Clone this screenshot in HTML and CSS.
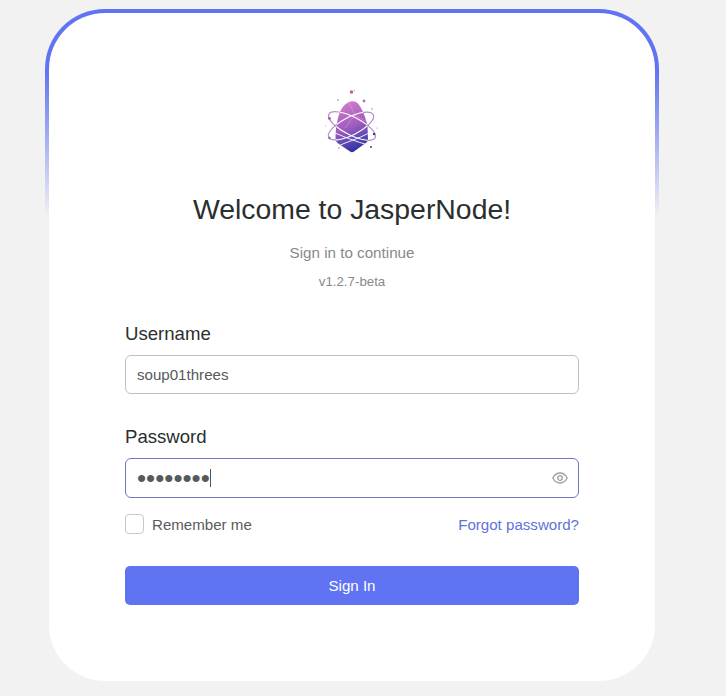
FILE: index.html
```html
<!DOCTYPE html>
<html lang="en">

<head>
  <meta charset="UTF-8">
  <meta name="viewport" content="width=device-width, initial-scale=1">
  <title>JasperNode - Sign in</title>
  <link rel="stylesheet" href="styles.css">
</head>

<body>
<div class="frame">
  <div class="card">
    <svg class="logo" viewBox="322 80 60 80" width="60" height="80">
      <defs>
        <linearGradient id="gem" x1="0.3" y1="0" x2="0.55" y2="1">
          <stop offset="0" stop-color="#d07cc8"/>
          <stop offset="0.5" stop-color="#a05cbe"/>
          <stop offset="0.78" stop-color="#5c48b4"/>
          <stop offset="1" stop-color="#2e2f9e"/>
        </linearGradient>
        <clipPath id="gem-clip">
          <path d="M349 102Q352 100.500 356 102Q359 103.500 361 108Q366 117 367.500 127L368 140Q367.500 142 365 143.500L354 151.500Q352 153 350 151.500L337.500 143Q335.500 141.500 335.500 138Q335.500 128 337.500 120Q339.500 110 345 104.500Z"/>
        </clipPath>
        <filter id="soft">
          <feGaussianBlur stdDeviation="0.3"/>
        </filter>
      </defs>
      <g filter="url(#soft)">
        <g fill="none" stroke="#b98acb" stroke-width="1.200">
          <ellipse cx="352" cy="126" rx="26" ry="9" transform="rotate(27 352 126)"/>
          <ellipse cx="351" cy="126" rx="25" ry="9" transform="rotate(-27 351 126)"/>
        </g>
        <path d="M349 102Q352 100.500 356 102Q359 103.500 361 108Q366 117 367.500 127L368 140Q367.500 142 365 143.500L354 151.500Q352 153 350 151.500L337.500 143Q335.500 141.500 335.500 138Q335.500 128 337.500 120Q339.500 110 345 104.500Z" fill="url(#gem)"/>
        <g clip-path="url(#gem-clip)">
          <path d="M349 103L355 115L367 122M355 115L345 128" fill="none" stroke="#e3a8de" stroke-width="0.500"/>
          <ellipse cx="352" cy="126" rx="26" ry="9" transform="rotate(27 352 126)" fill="none" stroke="#fff" stroke-width="1.100"/>
          <ellipse cx="351" cy="126" rx="25" ry="9" transform="rotate(-27 351 126)" fill="none" stroke="#fff" stroke-width="1.100"/>
          <path d="M335 133C345 137 356 142 369 145M336 147C346 142 358 139 369 133" fill="none" stroke="#fff" stroke-width="0.900"/>
        </g>
        <circle cx="351.500" cy="92" r="1.800" fill="#c05fa8"/>
        <circle cx="354.500" cy="90.500" r="0.700" fill="#d78fc0"/>
        <circle cx="364" cy="101" r="1.400" fill="#b86cc0"/>
        <circle cx="338" cy="100" r="0.900" fill="#c79ad0"/>
        <circle cx="329.500" cy="118.500" r="1.400" fill="#a858b0"/>
        <circle cx="325.500" cy="126" r="0.600" fill="#a8a8c8"/>
        <circle cx="372" cy="109" r="0.700" fill="#a868bb"/>
        <circle cx="374" cy="134" r="1.200" fill="#43358e"/>
        <circle cx="377" cy="128" r="0.600" fill="#8c8cb8"/>
        <circle cx="329.500" cy="138" r="1.200" fill="#9060a8"/>
        <circle cx="371" cy="147" r="1" fill="#4a3a90"/>
        <circle cx="339" cy="148" r="0.700" fill="#7060a8"/>
      </g>
    </svg>

    <h1 class="title">Welcome to JasperNode!</h1>
    <p class="subtitle">Sign in to continue</p>
    <p class="version">v1.2.7-beta</p>

    <form>
      <label class="label" for="username">Username</label>
      <input type="text" id="username" class="text" value="soup01threes">

      <label class="label second" for="password">Password</label>
      <div class="password-wrap">
        <input type="password" id="password" class="text password" value="12345678">
        <span class="caret"></span>
        <svg class="eye" viewBox="0 0 16 12" width="16" height="12">
          <path d="M0.800 6C2.500 2.800 5 1 8 1C11 1 13.500 2.800 15.200 6C13.500 9.200 11 11 8 11C5 11 2.500 9.200 0.800 6Z" fill="none" stroke="#a0a0a0" stroke-width="1.300"/>
          <circle cx="8" cy="6" r="2.300" fill="none" stroke="#a0a0a0" stroke-width="1.300"/>
        </svg>
      </div>

      <div class="options">
        <label class="remember">
          <input type="checkbox" class="check">
          <span>Remember me</span>
        </label>
        <a class="forgot" href="#">Forgot password?</a>
      </div>

      <button type="button" class="button">Sign In</button>
    </form>
  </div>
</div>
</body>

</html>
```

FILE: styles.css
```css
* {
    box-sizing: border-box;
}

body {
    margin: 0;
    height: 696px;
    overflow: hidden;
    padding: 9px 0 0 45px;
    background-color: #f2f2f2;
    font-family: "Liberation Sans", Arial, sans-serif;
}

.frame {
    width: 614px;
    height: 672px;
    padding: 4px 4px 0;
    border-radius: 60px 60px 56px 56px;
    background: linear-gradient(180deg, #6073f2 9%, rgba(96, 115, 242, 0) 31%);
}

.card {
    height: 668px;
    padding: 67px 76px 0;
    border-radius: 56px;
    background-color: #fff;
    text-align: center;
}

.logo {
    display: block;
    margin: 0 auto;
}

.title {
    margin: 33px 0 0;
    font-size: 28.4px;
    line-height: 32px;
    font-weight: normal;
    color: #2a2f2f;
}

.subtitle {
    margin: 18px 0 0;
    font-size: 15.2px;
    line-height: 20px;
    color: #878a8a;
}

.version {
    margin: 11px 0 0;
    font-size: 13.3px;
    line-height: 16px;
    color: #878a8a;
}

form {
    margin-top: 33px;
    text-align: left;
}

.label {
    display: block;
    margin-bottom: 10px;
    font-size: 18.6px;
    line-height: 22px;
    color: #2a2f2f;
}

.second {
    margin-top: 32px;
}

.text {
    display: block;
    width: 100%;
    height: 39px;
    padding: 0 11px;
    border: 1px solid #c0c0c0;
    border-radius: 6px;
    outline: none;
    background-color: #fff;
    font-family: inherit;
    font-size: 15.1px;
    color: #555a5a;
}

.password-wrap {
    position: relative;
}

.password {
    height: 40px;
    border-color: #7078c0;
    font-size: 26px;
}

.caret {
    position: absolute;
    left: 85px;
    top: 11px;
    width: 1px;
    height: 18px;
    background-color: #555;
}

.eye {
    position: absolute;
    right: 11px;
    top: 14px;
}

.options {
    display: flex;
    align-items: center;
    justify-content: space-between;
    margin-top: 16px;
    height: 20px;
}

.remember {
    display: flex;
    align-items: center;
    gap: 8px;
    font-size: 15.1px;
    color: #595c5c;
}

.check {
    appearance: none;
    width: 19px;
    height: 20px;
    margin: 0;
    border: 1px solid #c8c8c8;
    border-radius: 4px;
    background-color: #fff;
}

.forgot {
    font-size: 15.1px;
    color: #6272d8;
    text-decoration: none;
}

.button {
    display: block;
    width: 100%;
    height: 39px;
    margin-top: 32px;
    border: none;
    border-radius: 5px;
    background-color: #6073f2;
    font-family: inherit;
    font-size: 15.1px;
    color: #fff;
}
```
